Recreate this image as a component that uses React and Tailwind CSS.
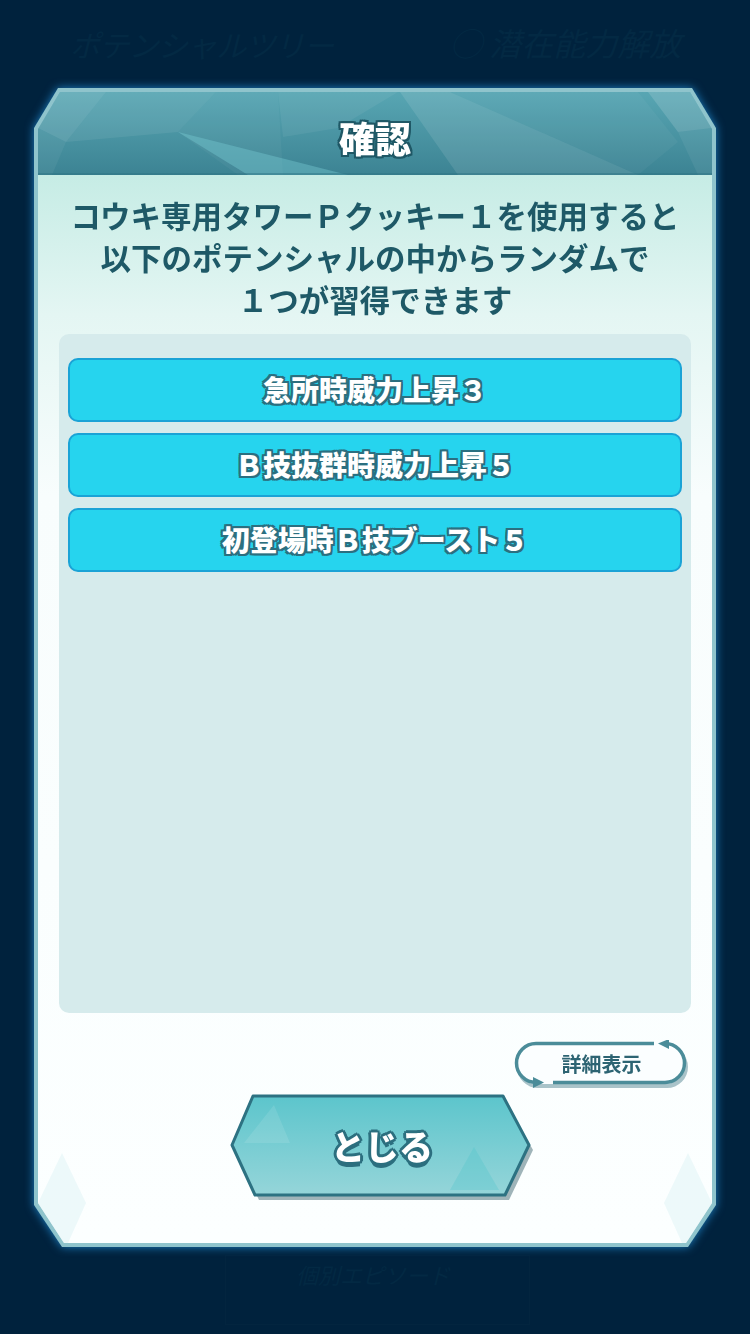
const options = ['急所時威力上昇３', 'Ｂ技抜群時威力上昇５', '初登場時Ｂ技ブースト５'];

function HeaderFacets() {
  return (
    <svg className="absolute inset-0" width="674" height="83" viewBox="0 0 674 83">
      <defs>
        <linearGradient id="hdr" x1="0" y1="0" x2="0" y2="1">
          <stop offset="0%" stopColor="#58a6b3" />
          <stop offset="100%" stopColor="#3c8393" />
        </linearGradient>
      </defs>
      <rect width="674" height="83" fill="url(#hdr)" />
      <polygon points="0,36 22,0 68,0 28,50" fill="#ffffff" opacity="0.12" />
      <polygon points="0,36 28,50 14,83 0,83" fill="#ffffff" opacity="0.05" />
      <polygon points="68,0 178,0 140,40 28,50" fill="#ffffff" opacity="0.07" />
      <polygon points="140,40 178,0 240,0 245,83 200,83" fill="#ffffff" opacity="0.04" />
      <polygon points="140,40 310,83 210,83" fill="#74c6cf" opacity="0.45" />
      <polygon points="240,0 360,0 300,36 245,45" fill="#ffffff" opacity="0.06" />
      <polygon points="362,0 412,0 600,83 420,83" fill="#ffffff" opacity="0.1" />
      <polygon points="412,0 600,0 640,50 600,83" fill="#ffffff" opacity="0.04" />
      <polygon points="610,0 652,0 674,36 640,40" fill="#ffffff" opacity="0.14" />
      <polygon points="640,40 674,36 674,83 660,83" fill="#ffffff" opacity="0.06" />
      <line x1="0" y1="82" x2="674" y2="82" stroke="#2f7484" strokeWidth="2" opacity="0.5" />
    </svg>
  );
}

function DetailButton() {
  return (
    <div className="relative w-[177px] h-[50px] flex items-center justify-center">
      <svg className="absolute inset-0" width="177" height="50" viewBox="0 0 177 50">
        <rect x="4" y="6" width="171" height="42" rx="21" fill="#a9c3c9" />
        <rect x="2" y="2" width="171" height="42" rx="21" fill="#fbfeff" />
        <path d="M141 3.5 H23 A19.5 19.5 0 0 0 23 42.5" fill="none" stroke="#4b8c99" strokeWidth="3.5" />
        <polygon points="20,37 31,42.5 20,48" fill="#4b8c99" />
        <path d="M40 42.5 H152 A19.5 19.5 0 0 0 152 3.5" fill="none" stroke="#4b8c99" strokeWidth="3.5" />
        <polygon points="156,-1 145,3.5 156,9" fill="#4b8c99" />
      </svg>
      <span className="relative text-[20px] font-bold text-[#2d6473] leading-none -mt-[3px]">詳細表示</span>
    </div>
  );
}

function CloseButton() {
  return (
    <div className="relative w-[304px] h-[108px] flex items-center justify-center">
      <svg className="absolute inset-0" width="304" height="108" viewBox="0 0 304 108">
        <defs>
          <linearGradient id="cls" x1="0" y1="0" x2="0" y2="1">
            <stop offset="0%" stopColor="#5cc5cc" />
            <stop offset="100%" stopColor="#95d5d9" />
          </linearGradient>
        </defs>
        <polygon points="25,6 275,6 303,56 279,106 29,106 5,56" fill="#9fb4b9" />
        <polygon points="23,2 273,2 299,51 275,101 25,101 2,51" fill="url(#cls)" stroke="#2d7282" strokeWidth="3" strokeLinejoin="round" />
        <polygon points="14,49 44,11 60,49" fill="#ffffff" opacity="0.1" />
        <polygon points="220,96 244,53 269,96" fill="#4cc2c9" opacity="0.3" />
      </svg>
      <span className="relative text-[34px] font-black text-white leading-none -mt-[4px] [text-shadow:3px_0_#2c6f7f,-3px_0_#2c6f7f,0_3px_#2c6f7f,0_-3px_#2c6f7f,2px_2px_#2c6f7f,-2px_-2px_#2c6f7f,2px_-2px_#2c6f7f,-2px_2px_#2c6f7f,0_5px_#2c6f7f]">
        とじる
      </span>
    </div>
  );
}

export default function App() {
  return (
    <div className="relative w-[750px] h-[1334px] overflow-hidden bg-[#00223d] font-['Noto_Sans_CJK_JP',sans-serif]">
      <div className="absolute left-[70px] top-[22px] text-[30px] italic text-[#032943] tracking-tight">ポテンシャルツリー</div>
      <div className="absolute left-[450px] top-[18px] text-[32px] italic text-[#032943]">◯ 潜在能力解放</div>
      <div className="absolute left-[225px] top-[1255px] w-[305px] h-[70px] border border-[#03253f]" />
      <div className="absolute left-[296px] top-[1258px] text-[22px] text-[#032943] italic">個別エピソード</div>

      <div className="relative pt-[88px] px-[34px]">
        <div className="[filter:drop-shadow(0_0_5px_#1c7fc2)]">
          <div className="bg-[#8fc4cc] p-[4px] [clip-path:polygon(24px_0,calc(100%_-_24px)_0,100%_40px,100%_calc(100%_-_42px),calc(100%_-_28px)_100%,28px_100%,0_calc(100%_-_42px),0_40px)]">
            <div className="flex flex-col h-[1151px] [clip-path:polygon(22px_0,calc(100%_-_22px)_0,100%_37px,100%_calc(100%_-_40px),calc(100%_-_26px)_100%,26px_100%,0_calc(100%_-_40px),0_37px)]">
              <div className="relative h-[83px] flex items-center justify-center">
                <HeaderFacets />
                <span className="relative text-[36px] font-black text-white leading-none mt-[6px] [text-shadow:2px_0_#1f5866,-2px_0_#1f5866,0_2px_#1f5866,0_-2px_#1f5866,2px_2px_#1f5866,-2px_-2px_#1f5866,2px_-2px_#1f5866,-2px_2px_#1f5866]">
                  確認
                </span>
              </div>

              <div className="relative flex-1 flex flex-col items-center bg-[linear-gradient(to_bottom,#c6ece5_0px,#e4f6f3_140px,#f8fdfd_320px,#fcffff_100%)]">
                <svg className="absolute left-0 bottom-0" width="80" height="110" viewBox="0 0 80 110">
                  <polygon points="0,70 24,20 48,70" fill="#e3f5f6" opacity="0.6" />
                  <polygon points="0,70 48,70 30,110 0,110" fill="#e3f5f6" opacity="0.6" />
                </svg>
                <svg className="absolute right-0 bottom-0" width="80" height="110" viewBox="0 0 80 110">
                  <polygon points="80,70 56,20 32,70" fill="#e3f5f6" opacity="0.6" />
                  <polygon points="80,70 32,70 50,110 80,110" fill="#e3f5f6" opacity="0.6" />
                </svg>

                <div className="relative pt-[19px] text-center text-[30.5px] leading-[42px] font-bold text-[#1e5967]">
                  <p>コウキ専用タワーＰクッキー１を使用すると</p>
                  <p>以下のポテンシャルの中からランダムで</p>
                  <p>１つが習得できます</p>
                </div>

                <div className="relative mt-[14px] w-[632px] h-[679px] rounded-[10px] bg-[#d6ebec] px-[9px] pt-[24px] flex flex-col gap-[11px]">
                  {options.map((o) => (
                    <div
                      key={o}
                      className="h-[64px] rounded-[10px] border-2 border-[#1aa3d6] bg-[#26d4ee] flex items-center justify-center"
                    >
                      <span className="text-[28px] font-black text-white leading-none -mt-[2px] [text-shadow:2px_0_#2b6f80,-2px_0_#2b6f80,0_2px_#2b6f80,0_-2px_#2b6f80,2px_2px_#2b6f80,-2px_-2px_#2b6f80,2px_-2px_#2b6f80,-2px_2px_#2b6f80]">
                        {o}
                      </span>
                    </div>
                  ))}
                </div>

                <div className="relative self-end mr-[22px] mt-[27px]">
                  <DetailButton />
                </div>

                <div className="relative mt-[4px] ml-[14px]">
                  <CloseButton />
                </div>
              </div>
            </div>
          </div>
        </div>
      </div>
    </div>
  );
}
